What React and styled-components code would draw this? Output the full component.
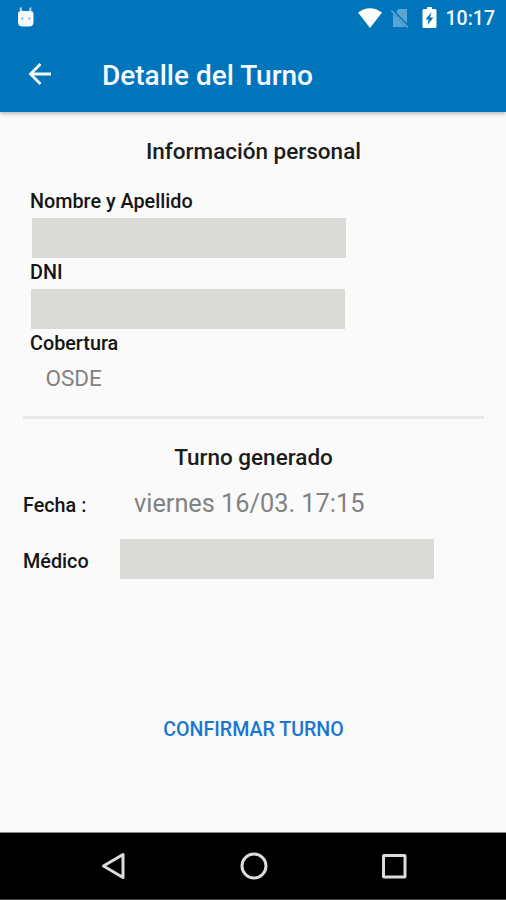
import React from 'react';
import styled, { createGlobalStyle } from 'styled-components';

const GlobalStyle = createGlobalStyle`
  * {
    box-sizing: border-box;
  }

  body {
    background-color: #fafafa;
    margin: 0;
  }
`;

const Screen = styled.div`
  background-color: #fafafa;
  color: #1c1c1c;
  display: flex;
  flex-direction: column;
  font-family: Roboto, sans-serif;
  height: 900px;
  overflow: hidden;
  white-space: nowrap;
  width: 506px;
`;

const Header = styled.header`
  background-color: #0175bb;
  box-shadow: 0 2px 4px rgba(0, 0, 0, 0.25);
  color: #f4faff;
  flex: none;
  height: 112px;
`;

const StatusBar = styled.div`
  align-items: center;
  display: flex;
  height: 35px;
  justify-content: space-between;
  padding: 0 11px 0 16px;
`;

const StatusIcons = styled.div`
  align-items: center;
  display: flex;
`;

const Icon = styled.svg`
  display: block;
  flex: none;
  margin-left: ${({ gap }) => gap || 0}px;
`;

const Clock = styled.span`
  font-size: 19.5px;
  font-weight: 500;
  line-height: 24px;
  margin-left: 9px;
  padding-top: 2px;
`;

const Toolbar = styled.div`
  align-items: center;
  display: flex;
  height: 78px;
  padding-left: 28px;
`;

const BackButton = styled.button`
  background: none;
  border: 0;
  height: 24px;
  margin-right: 50px;
  padding: 0;
  width: 24px;
`;

const Title = styled.h1`
  font-size: 28px;
  font-weight: 500;
  line-height: 32px;
  margin: 3px 0 0;
`;

const Content = styled.main`
  flex: 1;
  padding: 25px 22px 0 23px;
`;

const SectionTitle = styled.h2`
  font-size: 22.5px;
  font-weight: 500;
  line-height: 28px;
  margin: 0;
  text-align: center;
`;

const Fields = styled.div`
  display: flex;
  flex-direction: column;
  padding: 27px 7px 25px;
`;

const Label = styled.div`
  color: #151515;
  font-size: 19.8px;
  font-weight: 500;
  line-height: 20px;
  padding-top: ${({ offset }) => offset || 0}px;
  width: ${({ width }) => (width ? `${width}px` : 'auto')};
`;

const Redacted = styled.div`
  background-color: #dadbd6;
  height: 40px;
  margin: ${({ margin }) => margin || 0};
  width: 314px;
`;

const Value = styled.div`
  color: #828282;
  font-size: ${({ size }) => size}px;
  line-height: 26px;
  margin: ${({ margin }) => margin || 0};
`;

const Divider = styled.hr`
  background-color: #e8e8e8;
  border: 0;
  height: 3px;
  margin: 0 0 24px;
`;

const Row = styled.div`
  align-items: center;
  display: flex;
  height: 40px;
  margin-top: ${({ top }) => top}px;
`;

const ConfirmButton = styled.button`
  background: none;
  border: 0;
  color: #1976d2;
  display: block;
  font-family: inherit;
  font-size: 19.6px;
  font-weight: 500;
  height: 50px;
  line-height: 24px;
  margin: 126px auto 0;
  padding: 0 10px;
`;

const NavBar = styled.nav`
  align-items: center;
  background-color: #000;
  border-bottom: 1px solid #444;
  border-top: 1px solid #888;
  display: flex;
  flex: none;
  height: 68px;
  justify-content: space-between;
  padding: 0 98px 0 99px;
`;

const App = () => (
  <>
    <GlobalStyle />
    <Screen>
      <Header>
        <StatusBar>
          <Icon width="20" height="22" viewBox="0 0 20 22">
            <path d="M4.500 0.500l1 5M14.500 0.500l-.5 5" stroke="#b5d8f0" strokeWidth="2" />
            <path
              d="M5 4h9.500q3 0 3 3v8q0 4.500-4.500 4.500H6.500Q2 19.500 2 15V7q0-3 3-3z"
              fill="#f4faff"
            />
            <circle cx="6.3" cy="11.5" r="1.1" fill="#6aa9d6" />
            <circle cx="13.3" cy="11.5" r="1.1" fill="#6aa9d6" />
          </Icon>
          <StatusIcons>
            <Icon width="26" height="20" viewBox="0 0 26 20">
              <path d="M1 4.500Q13-4 25 4.500L13 20z" fill="#fff" />
            </Icon>
            <Icon gap={8} width="18" height="20" viewBox="0 0 18 20">
              <path d="M7.500 1H16v14.500L5 4zM2 5.500L15 19H2z" fill="#5aa5d4" />
              <path d="M0.500 2.500l16.500 17" stroke="#5aa5d4" strokeWidth="1.600" />
            </Icon>
            <Icon gap={13} width="15" height="21" viewBox="0 0 15 21">
              <path
                d="M5 0h5v2h3q1.500 0 1.500 1.500v16q0 1.500-1.500 1.500H2q-1.500 0-1.500-1.500v-16Q.5 2 2 2h3z"
                fill="#fff"
              />
              <path d="M9.500 5L3.500 12.500h3.200L5.600 18l5.800-7.500H8z" fill="#0175bb" />
            </Icon>
            <Clock>10:17</Clock>
          </StatusIcons>
        </StatusBar>
        <Toolbar>
          <BackButton aria-label="Volver">
            <Icon width="24" height="24" viewBox="0 0 24 24">
              <path
                d="M12.500 2L2.500 12l10 10M2.500 12H23"
                fill="none"
                stroke="#f4faff"
                strokeWidth="2.800"
              />
            </Icon>
          </BackButton>
          <Title>Detalle del Turno</Title>
        </Toolbar>
      </Header>

      <Content>
        <SectionTitle>Información personal</SectionTitle>
        <Fields>
          <Label>Nombre y Apellido</Label>
          <Redacted margin="6px 0 5px 2px" />
          <Label>DNI</Label>
          <Redacted margin="6px 0 5px 0.500px" />
          <Label>Cobertura</Label>
          <Value size={22.5} margin="11px 0 0 15.5px">
            OSDE
          </Value>
        </Fields>
        <Divider />

        <SectionTitle>Turno generado</SectionTitle>
        <Row top={14}>
          <Label width={111} offset={1}>
            Fecha :
          </Label>
          <Value size={25.3} margin="-2px 0 0">
            viernes 16/03. 17:15
          </Value>
        </Row>
        <Row top={14}>
          <Label width={97} offset={5}>
            Médico
          </Label>
          <Redacted />
        </Row>
        <ConfirmButton>CONFIRMAR TURNO</ConfirmButton>
      </Content>

      <NavBar>
        <Icon width="28" height="28" viewBox="0 0 28 28">
          <path
            d="M24 2.500v23L4.500 14z"
            fill="none"
            stroke="#dcdcdc"
            strokeWidth="3"
            strokeLinejoin="round"
          />
        </Icon>
        <Icon width="28" height="28" viewBox="0 0 28 28">
          <circle cx="14" cy="14" r="12" fill="none" stroke="#dcdcdc" strokeWidth="3" />
        </Icon>
        <Icon width="28" height="28" viewBox="0 0 28 28">
          <rect
            x="3.500"
            y="3.500"
            width="21.500"
            height="21.500"
            rx="0.500"
            fill="none"
            stroke="#dcdcdc"
            strokeWidth="3"
          />
        </Icon>
      </NavBar>
    </Screen>
  </>
);

export default App;
